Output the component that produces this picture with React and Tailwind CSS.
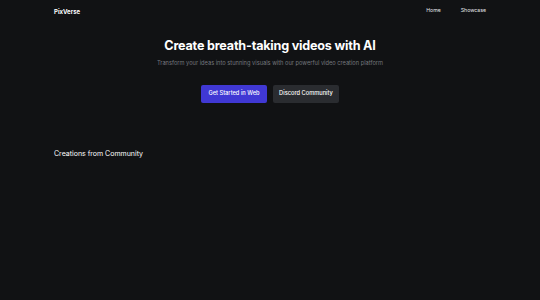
export default function App() {
  return (
    <div className="w-[540px] h-[300px] overflow-hidden bg-[#111214] text-white" style={{ fontFamily: 'Inter, "Liberation Sans", sans-serif' }}>
      <header className="mx-auto w-[432px] h-[20px] pt-[2px] flex items-center justify-between">
        <div className="text-[6px] font-bold">PixVerse</div>
        <nav className="flex items-center gap-[20px] text-[5.2px] text-gray-200">
          <a>Home</a>
          <a>Showcase</a>
        </nav>
      </header>

      <section className="flex flex-col items-center pt-[17px]">
        <h1 className="text-[12.6px] font-bold leading-[18px] tracking-[-0.2px]">Create breath-taking videos with AI</h1>
        <p className="mt-[4px] text-[5.7px] text-[#74777e]">Transform your ideas into stunning visuals with our powerful video creation platform</p>
        <div className="mt-[17px] flex gap-[6px]">
          <button className="w-[66px] h-[18px] rounded-[2px] bg-[#4038d4] text-[5.7px] font-medium">Get Started in Web</button>
          <button className="w-[66px] h-[18px] rounded-[2px] bg-[#2a2c30] text-[5.7px] font-medium">Discord Community</button>
        </div>
      </section>

      <section className="mx-auto w-[432px] mt-[46px]">
        <h2 className="text-[7px]">Creations from Community</h2>
      </section>
    </div>
  );
}
